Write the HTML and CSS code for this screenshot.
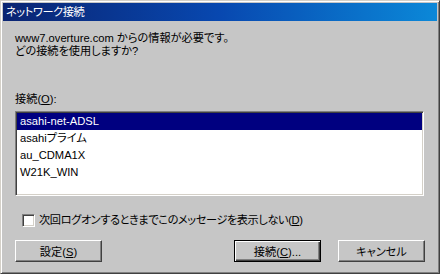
FILE: index.html
```html
<!DOCTYPE html>
<html lang="ja">
<head>
  <meta charset="UTF-8" />
  <title>ネットワーク接続</title>
  <link rel="stylesheet" href="styles.css">
</head>
<body>
  <div class="window">
    <div class="titlebar">ネットワーク接続</div>
    <div class="content">
      <p class="message">www7.overture.com からの情報が必要です。<br>どの接続を使用しますか?</p>
      <div class="field-label">接続(<u>O</u>):</div>
      <ul class="listbox">
        <li class="selected">asahi-net-ADSL</li>
        <li>asahiプライム</li>
        <li>au_CDMA1X</li>
        <li>W21K_WIN</li>
      </ul>
      <label class="check-row">
        <span class="checkbox"></span>
        <span>次回ログオンするときまでこのメッセージを表示しない(<u>D</u>)</span>
      </label>
      <div class="button-row">
        <button class="btn">設定(<u>S</u>)</button>
        <div class="spacer"></div>
        <button class="btn default">接続(<u>C</u>)...</button>
        <button class="btn">キャンセル</button>
      </div>
    </div>
  </div>
</body>
</html>
```

FILE: styles.css
```css
* { box-sizing: border-box; }
body {
  margin: 0;
  padding: 0;
  font-family: "Liberation Sans", "Noto Sans CJK JP", sans-serif;
  font-size: 11.2px;
  font-feature-settings: "palt";
  color: #000;
  background: #c6c6c6;
}
.window {
  width: 440px;
  height: 274px;
  background: #c6c6c6;
  border: 1px solid;
  border-color: #d4d0c8 #404040 #404040 #d4d0c8;
  box-shadow: inset 1px 1px #fff, inset -1px -1px #808080;
  padding: 2px;
  display: flex;
  flex-direction: column;
}
.titlebar {
  height: 18px;
  line-height: 18px;
  padding-left: 3px;
  color: #fff;
  letter-spacing: -0.4px;
  background: linear-gradient(to right, #0a2472, #0848b0 50%, #0b88d8);
}
.content {
  padding: 0 12px;
}
.message {
  margin: 11px 0 0;
  line-height: 13px;
}
.field-label {
  margin-top: 35px;
  line-height: 12px;
}
.listbox {
  list-style: none;
  margin: 6px 0 0;
  width: 409px;
  height: 85px;
  background: #fff;
  border: 1px solid;
  border-color: #808080 #fff #fff #808080;
  box-shadow: inset 1px 1px #404040, inset -1px -1px #d4d0c8;
  padding: 1px;
}
.listbox li {
  height: 17px;
  line-height: 17px;
  padding-left: 3px;
}
.listbox li.selected {
  background: #000080;
  color: #fff;
}
.check-row {
  margin-top: 18px;
  margin-left: 7px;
  height: 13px;
  display: flex;
  align-items: center;
  gap: 4px;
  line-height: 13px;
  letter-spacing: -0.4px;
}
.checkbox {
  width: 13px;
  height: 13px;
  background: #fff;
  border: 1px solid;
  border-color: #808080 #fff #fff #808080;
  box-shadow: inset 1px 1px #404040, inset -1px -1px #d4d0c8;
}
.button-row {
  margin-top: 13px;
  display: flex;
  gap: 17px;
}
.spacer { flex: 1; }
.btn {
  width: 87px;
  height: 22px;
  padding: 0;
  font: inherit;
  color: #000;
  background: #c6c6c6;
  border: 1px solid;
  border-color: #fff #404040 #404040 #fff;
  box-shadow: inset -1px -1px #808080;
}
.btn.default {
  border: 1px solid #000;
  box-shadow: inset 1px 1px #fff, inset -1px -1px #404040, inset -2px -2px #808080;
}
```
